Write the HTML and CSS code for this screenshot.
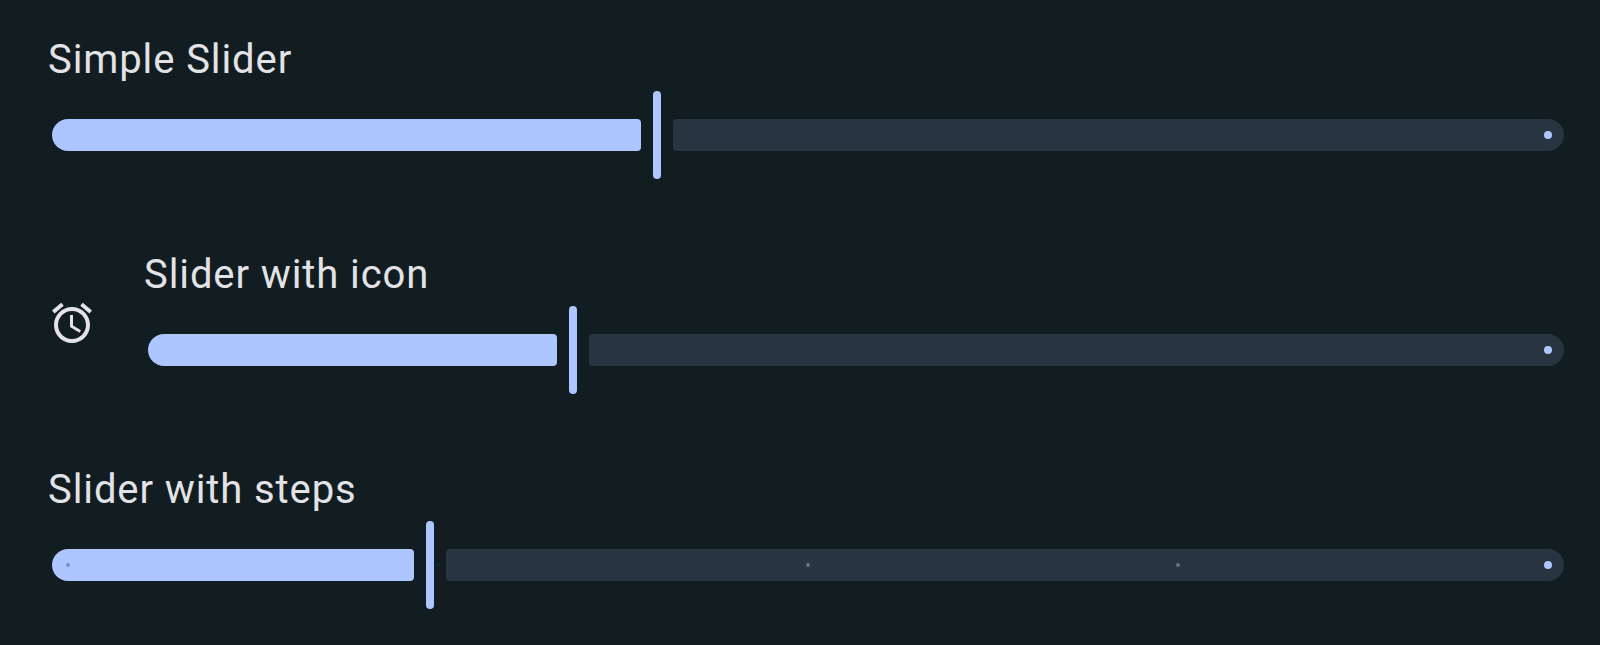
FILE: index.html
```html
<!DOCTYPE html>
<html lang="en">
<head>
<meta charset="utf-8">
<title>Sliders</title>
<link rel="stylesheet" href="styles.css">
</head>
<body>
<main class="list">
  <section class="row">
    <div class="content">
      <div class="title">Simple Slider</div>
      <div class="slider">
        <div class="active" style="width:589px"></div>
        <div class="thumb"></div>
        <div class="inactive"><span class="stop"></span></div>
      </div>
    </div>
  </section>
  <section class="row">
    <svg class="icon" viewBox="0 0 24 24" aria-hidden="true"><path d="M22 5.72l-4.6-3.86-1.29 1.53 4.6 3.86L22 5.72zM7.88 3.39L6.6 1.86 2 5.71l1.29 1.53 4.59-3.85zM12.5 8H11v6l4.75 2.85.75-1.23-4-2.37V8zM12 4c-4.97 0-9 4.03-9 9s4.02 9 9 9c4.97 0 9-4.03 9-9s-4.03-9-9-9zm0 16c-3.87 0-7-3.13-7-7s3.13-7 7-7 7 3.13 7 7-3.13 7-7 7z"/></svg>
    <div class="content">
      <div class="title">Slider with icon</div>
      <div class="slider">
        <div class="active" style="width:409px"></div>
        <div class="thumb"></div>
        <div class="inactive"><span class="stop"></span></div>
      </div>
    </div>
  </section>
  <section class="row">
    <div class="content">
      <div class="title">Slider with steps</div>
      <div class="slider">
        <div class="active" style="width:362px"></div>
        <div class="thumb"></div>
        <div class="inactive"><span class="stop"></span></div>
        <div class="ticks">
          <span class="tick on-active"></span>
          <span class="tick in-gap"></span>
          <span class="tick"></span>
          <span class="tick"></span>
          <span class="tick hidden"></span>
        </div>
      </div>
    </div>
  </section>
</main>
</body>
</html>
```
FILE: styles.css
```css
body {
  margin: 0;
  background: #121d21;
  color: #e3e2e6;
  font-family: Roboto, sans-serif;
}
.list {
  display: flex;
  flex-direction: column;
}
.row {
  display: flex;
  height: 215px;
  box-sizing: border-box;
  padding: 36px 36px 0 48px;
}
.icon {
  flex: none;
  width: 48px;
  height: 48px;
  margin: 48px 48px 0 0;
  fill: currentColor;
}
.content {
  flex: 1;
}
.title {
  height: 55px;
  line-height: 48px;
  font-size: 40px;
  letter-spacing: 0.9px;
  white-space: nowrap;
}
.slider {
  position: relative;
  display: flex;
  align-items: center;
  gap: 12px;
  height: 88px;
  margin-left: 4px;
}
.active,
.inactive {
  height: 32px;
}
.active {
  flex: none;
  border-radius: 16px 4px 4px 16px;
  background: #adc6ff;
}
.thumb {
  flex: none;
  width: 8px;
  height: 88px;
  border-radius: 4px;
  background: #adc6ff;
}
.inactive {
  flex: 1;
  display: flex;
  align-items: center;
  justify-content: flex-end;
  border-radius: 4px 16px 16px 4px;
  background: #283440;
}
.stop {
  width: 8px;
  height: 8px;
  margin-right: 12px;
  border-radius: 50%;
  background: #adc6ff;
}
.ticks {
  position: absolute;
  inset: 42px 14px;
  display: flex;
  justify-content: space-between;
}
.tick {
  width: 4px;
  height: 4px;
  border-radius: 50%;
  background: #68737f;
}
.on-active {
  background: #768fc7;
}
.in-gap {
  background: #12263c;
}
.hidden {
  visibility: hidden;
}
```
